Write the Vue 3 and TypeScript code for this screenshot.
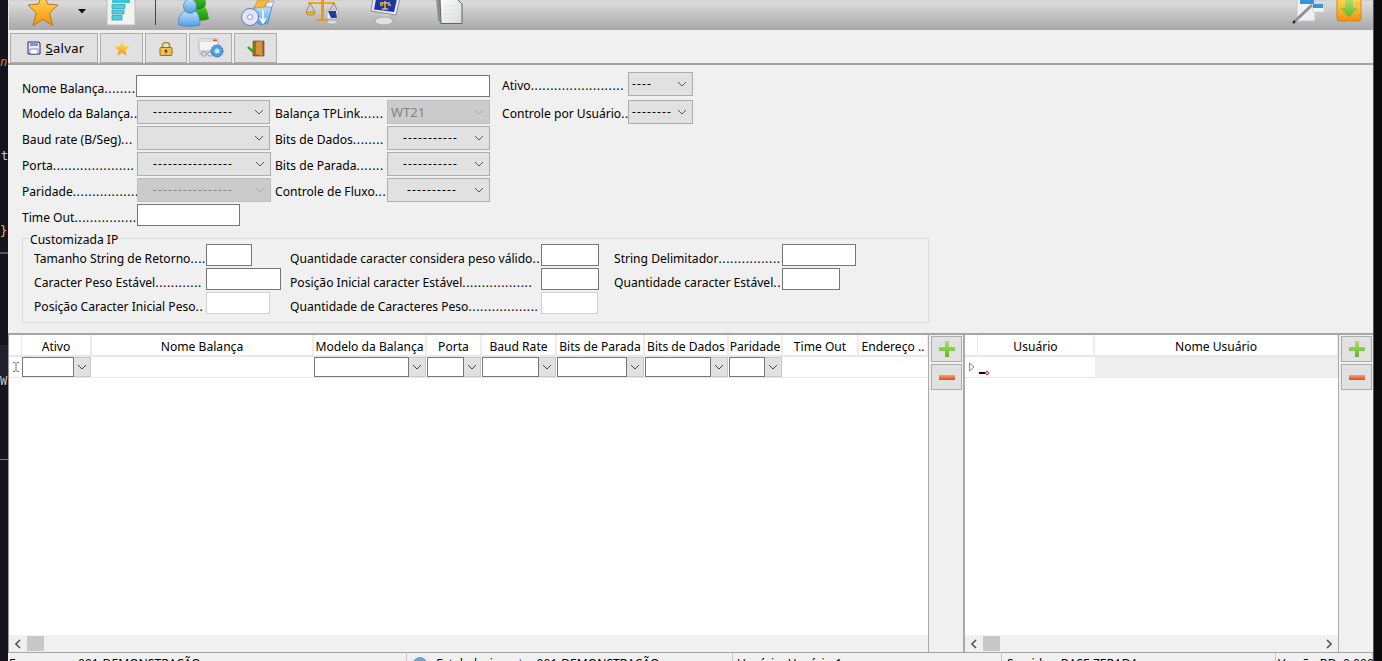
<script setup lang="ts">
type Ctl = { w: number; text?: string; off?: boolean };

const formRows: { label: string; ctl: Ctl; label2: string; ctl2: Ctl }[] = [
  { label: 'Modelo da Balança..', ctl: { w: 133, text: '----------------' }, label2: 'Balança TPLink......', ctl2: { w: 103, text: 'WT21', off: true } },
  { label: 'Baud rate (B/Seg)...', ctl: { w: 133 }, label2: 'Bits de Dados........', ctl2: { w: 103, text: '-----------' } },
  { label: 'Porta.....................', ctl: { w: 134, text: '----------------' }, label2: 'Bits de Parada.......', ctl2: { w: 103, text: '-----------' } },
  { label: 'Paridade.................', ctl: { w: 134, text: '----------------', off: true }, label2: 'Controle de Fluxo...', ctl2: { w: 103, text: '----------' } },
];

const customRows = [
  { a: 'Tamanho String de Retorno....', aw: 46, b: 'Quantidade caracter considera peso válido..', bw: 58, c: 'String Delimitador................', cw: 74 },
  { a: 'Caracter Peso Estável............', aw: 75, b: 'Posição Inicial caracter Estável..................', bw: 58, c: 'Quantidade caracter Estável..', cw: 58 },
  { a: 'Posição Caracter Inicial Peso..', aw: 64, b: 'Quantidade de Caracteres Peso..................', bw: 57, c: '', cw: 0 },
];

const balancaCols = [
  { name: 'Ativo', w: 70, sel: true },
  { name: 'Nome Balança', w: 222, sel: false },
  { name: 'Modelo da Balança', w: 113, sel: true },
  { name: 'Porta', w: 55, sel: true },
  { name: 'Baud Rate', w: 75, sel: true },
  { name: 'Bits de Parada', w: 88, sel: true },
  { name: 'Bits de Dados', w: 84, sel: true },
  { name: 'Paridade', w: 54, sel: true },
  { name: 'Time Out', w: 76, sel: false },
  { name: 'Endereço ..', w: 70, sel: false },
];

const statusCells = [
  { text: 'Empresa....: 001-DEMONSTRAÇÃO', w: 399, pad: 1, icon: false },
  { text: 'Estabelecimento: 001-DEMONSTRAÇÃO', w: 326, pad: 5, icon: true },
  { text: 'Usuário: Usuário 1', w: 269, pad: 4, icon: false },
  { text: 'Servidor: BASE ZERADA', w: 274, pad: 5, icon: false },
  { text: 'Versão BD: 0.000', w: 97, pad: 2, icon: false },
];

// the trailing dots run wider than the words in the original font
function words(label: string) {
  return label.replace(/\.+$/, '');
}

function dots(label: string) {
  return label.slice(words(label).length);
}
</script>

<template>
  <div class="desk">
    <svg class="defs" width="0" height="0" aria-hidden="true">
      <defs>
        <linearGradient id="gStar" x1="0" y1="0" x2="0" y2="1">
          <stop offset="0" stop-color="#ffe27a" />
          <stop offset="0.55" stop-color="#fdb92e" />
          <stop offset="1" stop-color="#f08f12" />
        </linearGradient>
        <linearGradient id="gBlue" x1="0" y1="0" x2="0" y2="1">
          <stop offset="0" stop-color="#bfe0fb" />
          <stop offset="1" stop-color="#4f9ee6" />
        </linearGradient>
        <linearGradient id="gGreen" x1="0" y1="0" x2="0" y2="1">
          <stop offset="0" stop-color="#48c828" />
          <stop offset="1" stop-color="#1d8a0c" />
        </linearGradient>
        <linearGradient id="gPlus" x1="0" y1="0" x2="0" y2="1">
          <stop offset="0" stop-color="#b4e06a" />
          <stop offset="1" stop-color="#62b52c" />
        </linearGradient>
        <linearGradient id="gMinus" x1="0" y1="0" x2="0" y2="1">
          <stop offset="0" stop-color="#f9a070" />
          <stop offset="1" stop-color="#e2481e" />
        </linearGradient>
        <linearGradient id="gPage" x1="0" y1="0" x2="1" y2="1">
          <stop offset="0" stop-color="#ffffff" />
          <stop offset="1" stop-color="#d5dbd8" />
        </linearGradient>
      </defs>
    </svg>

    <div class="code-strip">
      <span class="c1">n.</span>
      <span class="c2">t</span>
      <span class="c3">}</span>
      <i class="c4"></i>
      <i class="c5"></i>
      <span class="c6">W</span>
      <i class="c7"></i>
    </div>

    <div class="win">
      <header class="topbar">
        <svg class="ti" style="margin-left:18px" width="32" height="30" viewBox="0 0 32 30">
          <path d="M16 -9 20.5 4 31 5 22.6 13 25.5 25.5 16 19.5 6 25.5 9.2 13 1 5 11.5 4Z" fill="url(#gStar)" stroke="#b5772a" />
        </svg>
        <svg class="ti" style="margin-left:18px" width="10" height="30" viewBox="0 0 10 30">
          <path d="M1 9H9L5 13.5Z" fill="#111" />
        </svg>
        <svg class="ti" style="margin-left:19px" width="30" height="30" viewBox="0 0 30 30">
          <path d="M1 -1H29V25H1Z" fill="#f1f4ee" stroke="#b9bfbb" />
          <path d="M6 0H24V3H6Z" fill="#38c6d9" />
          <path d="M6 4.500H19V8.500H6ZM6 10H18V14H6ZM6 15.500H16V20H6Z" fill="#4fd0e0" stroke="#2399ad" stroke-width=".7" />
        </svg>
        <i class="tsep"></i>
        <svg class="ti" style="margin-left:22px" width="32" height="30" viewBox="0 0 32 30">
          <ellipse cx="21" cy="3" rx="7" ry="7" fill="url(#gGreen)" />
          <path d="M14 8C18 11 25 11 27 7 30 11 30 16 31 19 27 21 19 21 15 20Z" fill="url(#gGreen)" />
          <ellipse cx="12" cy="6" rx="6.500" ry="7" fill="url(#gBlue)" stroke="#3f7fc0" stroke-width=".7" />
          <path d="M0 24C0 17 4 12 7 11 10 14 14 14 17 11 20 12 22 17 22 25 15 27 5 27 0 24Z" fill="url(#gBlue)" stroke="#3f7fc0" stroke-width=".7" />
        </svg>
        <svg class="ti" style="margin-left:31px" width="34" height="30" viewBox="0 0 34 30">
          <path d="M13 7 31 6 27 23 20 25 15 22Z" fill="url(#gBlue)" stroke="#5f8fc0" />
          <path d="M22 10V22M19 18 22 23 25 18" fill="none" stroke="#fff" stroke-width="1.500" />
          <path d="M17 0 28 0 23 7 13 8Z" fill="#f8b846" stroke="#d18a20" stroke-width=".7" />
          <path d="M25 3 33 1 31 7 25 7Z" fill="#eef2f8" stroke="#7f8fa8" stroke-width=".7" />
          <circle cx="9" cy="17" r="8.500" fill="#e2e5f6" stroke="#6a75c0" />
          <circle cx="9" cy="17" r="2.500" fill="#fff" stroke="#8e97d0" />
        </svg>
        <svg class="ti" style="margin-left:30px" width="34" height="30" viewBox="0 0 34 30">
          <path d="M3 2H30V4H3Z" fill="#eda62a" />
          <path d="M16 0H19V20H16ZM11 19H23V21H11Z" fill="#e99a1c" />
          <path d="M5 3 1 12M5 3 10 12M29 3 25 10M29 3 33 12" stroke="#8a7a55" stroke-width=".8" fill="none" />
          <path d="M1 12H10L9 15H2Z" fill="#e6b43a" stroke="#a57b1a" stroke-width=".6" />
          <path d="M22 10H33V19H22Z" fill="#eef1f5" stroke="#9aa0a6" stroke-width=".7" />
          <path d="M23 11 31 11 32 18 26 18Z" fill="#1e3aa8" />
          <ellipse cx="27" cy="22" rx="5" ry="2" fill="#d9dcdc" stroke="#99a" stroke-width=".5" />
        </svg>
        <svg class="ti" style="margin-left:31px" width="32" height="30" viewBox="0 0 32 30">
          <path d="M3 -2 30 -2 26 15 1 11Z" fill="#e7eaf0" stroke="#8b8f96" />
          <path d="M6 -1 27 -1 24 12 4 9.500Z" fill="#1c35a8" />
          <path d="M10 3H20M15 1V9M12 9H18" stroke="#f1b631" stroke-width="1.500" fill="none" />
          <path d="M10 5H13M18 5H21" stroke="#f1b631" stroke-width="1.500" />
          <path d="M11 14H19V19H11Z" fill="#c8cccc" />
          <ellipse cx="14" cy="21" rx="9" ry="4" fill="#dfe2e2" stroke="#a7aaaa" />
        </svg>
        <svg class="ti" style="margin-left:33px" width="30" height="30" viewBox="0 0 30 30">
          <path d="M1 -2 5 -2 6 24 3 20Z" fill="#8b8d8d" />
          <path d="M5 -2H21L27 4V23.500H6Z" fill="url(#gPage)" stroke="#5f6464" />
          <path d="M9 6H24M9 10H24M9 14H24M9 18H24" stroke="#dde4e1" />
        </svg>
        <span class="fill"></span>
        <svg class="ti" width="32" height="30" viewBox="0 0 32 30">
          <path d="M5 -1H23V21H5Z" fill="#eef0f2" stroke="#c2c5c8" />
          <path d="M8 0H22V4H8Z" fill="#3296dc" />
          <path d="M21 5H32V12H21Z" fill="#f2f4f5" stroke="#c2c5c8" stroke-width=".6" />
          <path d="M21 4H31V8H21Z" fill="#3296dc" />
          <path d="M1 23 20 5" stroke="#8e9294" stroke-width="3" />
          <path d="M1 23 3 21" stroke="#222" stroke-width="2" />
        </svg>
        <svg class="ti" style="margin-left:12px;margin-right:11px" width="26" height="30" viewBox="0 0 26 30">
          <rect x="1" y="-6" width="24" height="27" rx="3" fill="url(#gStar)" stroke="#d3851c" />
          <path d="M9 -1H17V8H22L13 17 4 8H9Z" fill="url(#gPlus)" />
        </svg>
      </header>

      <nav class="toolbar">
        <button type="button" class="tb tb-save">
          <svg width="14" height="14" viewBox="0 0 14 14">
            <path d="M1 1H12L13 2V13H1Z" fill="#e8ecf6" stroke="#1c2862" />
            <path d="M3 1H11V5H3Z" fill="#8793c4" />
            <path d="M3 8H11V13H3Z" fill="#fff" stroke="#3a4688" stroke-width=".6" />
          </svg>
          <span class="save-txt"><u>S</u>alvar</span>
        </button>
        <button type="button" class="tb" style="width:43px" aria-label="Favorito">
          <svg width="18" height="17" viewBox="0 0 18 17">
            <path d="M9 1 11.300 6 17 6.600 12.600 10.200 14 16 9 13 4 16 5.400 10.200 1 6.600 6.700 6Z" fill="url(#gStar)" stroke="#e8d9b0" stroke-width=".8" />
          </svg>
        </button>
        <button type="button" class="tb" style="width:42px" aria-label="Bloquear">
          <svg width="14" height="15" viewBox="0 0 14 15">
            <path d="M3.500 7V4.500C3.500 .5 10.500 .5 10.500 4.500V7" fill="none" stroke="#b58a2a" stroke-width="1.600" />
            <rect x="1" y="6.500" width="12" height="8" rx="1" fill="#f3c048" stroke="#94701c" />
            <path d="M7 8.500V12.500M5.500 10.500 7 9 8.500 10.500" stroke="#222" fill="none" />
          </svg>
        </button>
        <button type="button" class="tb" style="width:43px" aria-label="Configurar">
          <svg width="26" height="20" viewBox="0 0 26 20">
            <path d="M1 1H20V13H1Z" fill="#f4f4f4" stroke="#b5b5b5" />
            <path d="M1 1H20V4H1Z" fill="#dcdcdc" />
            <path d="M15 1.500H19V3H15Z" fill="#d94b3c" />
            <path d="M1 13H15V17H1Z" fill="#c8ccd0" />
            <circle cx="6" cy="16" r="2.200" fill="#e8eaec" stroke="#8f9499" />
            <circle cx="12" cy="16" r="2.200" fill="#e8eaec" stroke="#8f9499" />
            <circle cx="19" cy="13" r="6" fill="#4a9fe6" stroke="#1e6cb8" stroke-dasharray="2 1" />
            <circle cx="19" cy="13" r="2.500" fill="#cfe6fa" />
          </svg>
        </button>
        <button type="button" class="tb" style="width:43px" aria-label="Sair">
          <svg width="18" height="17" viewBox="0 0 18 17">
            <path d="M6 1H17V16H6Z" fill="#a8671e" stroke="#7a4a14" stroke-width=".7" />
            <path d="M9 2 15 1V16L9 14Z" fill="#d8923c" />
            <path d="M1 7 5 11 9 6" fill="none" stroke="#3aa02a" stroke-width="2.400" />
          </svg>
        </button>
      </nav>

      <section class="form">
        <div class="form-top">
          <div class="form-left">
            <label class="lbl">Nome Balança<span class="dots">........</span></label>
            <div class="inp name-inp"></div>
            <template v-for="r in formRows" :key="r.label">
              <label class="lbl">{{ words(r.label) }}<span class="dots">{{ dots(r.label) }}</span></label>
              <div class="sel" :class="{ off: r.ctl.off }" :style="{ width: r.ctl.w + 'px' }">
                <span class="sel-txt">{{ r.ctl.text }}</span>
                <svg width="10" height="6" viewBox="0 0 10 6"><path d="M1 1 5 5 9 1" fill="none" stroke="currentColor" /></svg>
              </div>
              <label class="lbl">{{ words(r.label2) }}<span class="dots">{{ dots(r.label2) }}</span></label>
              <div class="sel" :class="{ off: r.ctl2.off, xs: r.ctl2.text === '----------', wt: r.ctl2.text === 'WT21' }" :style="{ width: r.ctl2.w + 'px' }">
                <span class="sel-txt">{{ r.ctl2.text }}</span>
                <svg width="10" height="6" viewBox="0 0 10 6"><path d="M1 1 5 5 9 1" fill="none" stroke="currentColor" /></svg>
              </div>
            </template>
            <label class="lbl">Time Out<span class="dots">................</span></label>
            <div class="inp time-inp"></div>
          </div>
          <div class="form-right">
            <label class="lbl">Ativo<span class="dots">........................</span></label>
            <div class="sel tiny">
              <span class="sel-txt">----</span>
              <svg width="10" height="6" viewBox="0 0 10 6"><path d="M1 1 5 5 9 1" fill="none" stroke="currentColor" /></svg>
            </div>
            <label class="lbl">Controle por Usuário<span class="dots">..</span></label>
            <div class="sel tiny">
              <span class="sel-txt">--------</span>
              <svg width="10" height="6" viewBox="0 0 10 6"><path d="M1 1 5 5 9 1" fill="none" stroke="currentColor" /></svg>
            </div>
          </div>
        </div>

        <div class="group">
          <span class="legend">Customizada IP</span>
          <div class="group-grid">
            <template v-for="(r, i) in customRows" :key="r.a">
              <label class="lbl">{{ words(r.a) }}<span class="dots">{{ dots(r.a) }}</span></label>
              <div class="inp" :class="{ faint: i === 2 }" :style="{ width: r.aw + 'px' }"></div>
              <label class="lbl">{{ words(r.b) }}<span class="dots">{{ dots(r.b) }}</span></label>
              <div class="inp" :class="{ faint: i === 2 }" :style="{ width: r.bw + 'px' }"></div>
              <label class="lbl">{{ words(r.c) }}<span class="dots">{{ dots(r.c) }}</span></label>
              <div v-if="r.cw" class="inp" :style="{ width: r.cw + 'px' }"></div>
            </template>
          </div>
        </div>
      </section>

      <section class="grids">
        <div class="panel panel-a">
          <div class="table">
            <div class="thead">
              <div class="cell ind ind-a"></div>
              <div v-for="c in balancaCols" :key="c.name" class="cell th" :style="{ width: c.w + 'px' }">{{ c.name }}</div>
            </div>
            <div class="trow">
              <div class="cell ind ind-a">
                <svg width="8" height="10" viewBox="0 0 8 10"><path d="M1 .5H3L4 1.500 5 .5H7M4 1.500V8.500M1 9.500H3L4 8.500 5 9.500H7" fill="none" stroke="#777" /></svg>
              </div>
              <div v-for="c in balancaCols" :key="c.name" class="cell td" :style="{ width: c.w + 'px' }">
                <div v-if="c.sel" class="cmb">
                  <span class="cmb-box"></span>
                  <span class="cmb-arrow">
                    <svg width="10" height="6" viewBox="0 0 10 6"><path d="M1 1 5 5 9 1" fill="none" stroke="#444" /></svg>
                  </span>
                </div>
              </div>
            </div>
          </div>
          <div class="hscroll">
            <svg width="6" height="10" viewBox="0 0 6 10"><path d="M5 1 1 5 5 9" fill="none" stroke="#555" stroke-width="1.600" /></svg>
            <i class="thumb"></i>
          </div>
        </div>
        <div class="side">
          <button type="button" class="pm" aria-label="Adicionar">
            <svg width="16" height="16" viewBox="0 0 16 16"><path d="M6 0H10V6H16V10H10V16H6V10H0V6H6Z" fill="url(#gPlus)" /></svg>
          </button>
          <button type="button" class="pm" aria-label="Remover">
            <svg width="16" height="5" viewBox="0 0 16 5"><path d="M0 0H16V5H0Z" fill="url(#gMinus)" /></svg>
          </button>
        </div>

        <div class="panel panel-b">
          <div class="table">
            <div class="thead">
              <div class="cell ind ind-b"></div>
              <div class="cell th" style="width:117px">Usuário</div>
              <div class="cell th" style="width:244px">Nome Usuário</div>
            </div>
            <div class="trow">
              <div class="cell ind ind-b">
                <svg class="arrow" width="6" height="10" viewBox="0 0 6 10"><path d="M.5 1 5 5 .5 9Z" fill="#fff" stroke="#888" /></svg>
              </div>
              <div class="cell td user-cell" style="width:117px">
                <i class="mark"></i>
              </div>
              <div class="cell td name-cell" style="width:244px"></div>
            </div>
          </div>
          <div class="hscroll">
            <svg width="6" height="10" viewBox="0 0 6 10"><path d="M5 1 1 5 5 9" fill="none" stroke="#555" stroke-width="1.600" /></svg>
            <i class="thumb"></i>
            <span class="fill"></span>
            <svg width="6" height="10" viewBox="0 0 6 10"><path d="M1 1 5 5 1 9" fill="none" stroke="#555" stroke-width="1.600" /></svg>
          </div>
        </div>
        <div class="side">
          <button type="button" class="pm" aria-label="Adicionar usuário">
            <svg width="16" height="16" viewBox="0 0 16 16"><path d="M6 0H10V6H16V10H10V16H6V10H0V6H6Z" fill="url(#gPlus)" /></svg>
          </button>
          <button type="button" class="pm" aria-label="Remover usuário">
            <svg width="16" height="5" viewBox="0 0 16 5"><path d="M0 0H16V5H0Z" fill="url(#gMinus)" /></svg>
          </button>
        </div>
      </section>

      <footer class="status">
        <div v-for="s in statusCells" :key="s.text" class="st" :style="{ width: s.w + 'px', paddingLeft: s.pad + 'px' }">
          <svg v-if="s.icon" class="st-ico" width="16" height="14" viewBox="0 0 16 14"><circle cx="8" cy="8" r="7" fill="#6f9fd0" /></svg>
          {{ s.text }}
        </div>
      </footer>
    </div>
    <div class="edge"></div>
  </div>
</template>

<style scoped>
.desk {
  display: flex;
  width: 1382px;
  height: 661px;
  overflow: hidden;
  background: #000;
  font-family: "Noto Sans", "Liberation Sans", sans-serif;
  font-size: 12.1px;
  color: #000;
}

.defs {
  position: absolute;
}

.code-strip {
  position: relative;
  flex: none;
  width: 8px;
  background: #15141f;
  overflow: hidden;
  font-family: "DejaVu Sans Mono", monospace;
  font-size: 12px;
}

.code-strip span,
.code-strip i {
  position: absolute;
  display: block;
}

.c1 {
  top: 55px;
  left: 0;
  color: #d9803a;
  font-style: italic;
}

.c2 {
  top: 149px;
  left: 1px;
  color: #b8cfe6;
}

.c3 {
  top: 224px;
  left: 0;
  color: #e8c23a;
}

.c4 {
  top: 252px;
  left: 0;
  width: 8px;
  height: 2px;
  background: #555;
}

.c5 {
  top: 345px;
  left: 0;
  width: 8px;
  height: 33px;
  background: #211f30;
}

.c6 {
  top: 374px;
  left: 0;
  color: #c9c9c9;
}

.c7 {
  top: 459px;
  left: 0;
  width: 8px;
  height: 1px;
  background: #e040a0;
}

.win {
  flex: none;
  width: 1365px;
  height: 661px;
  display: flex;
  flex-direction: column;
  background: #f0f0f0;
}

.edge {
  flex: none;
  width: 9px;
  background: #0a0a0a;
  border-left: 1px solid #555;
}

.topbar {
  flex: none;
  height: 30px;
  display: flex;
  overflow: hidden;
  background: linear-gradient(#cdcdcd, #dcdcdc 2px, #c8c8c8 40%, #a8a8a8);
  border-left: 1px solid #e6e6e6;
}

.ti {
  flex: none;
}

.tsep {
  flex: none;
  width: 1px;
  height: 25px;
  margin-left: 19px;
  background: #444;
}

.fill {
  flex: 1;
}

.toolbar {
  flex: none;
  height: 35px;
  box-sizing: border-box;
  padding: 3px 0 0 2px;
  display: flex;
  gap: 2px;
  border-bottom: 2px solid #a5a5a5;
}

.tb {
  height: 30px;
  width: 43px;
  box-sizing: border-box;
  display: flex;
  align-items: center;
  justify-content: center;
  gap: 4px;
  padding: 0;
  background: #e1e1e1;
  border: 1px solid #adadad;
  font: inherit;
  color: #000;
}

.tb-save {
  width: 88px;
  gap: 5px;
  padding-left: 3px;
}

.save-txt {
  font-size: 13px;
  letter-spacing: 0.3px;
}

.form {
  flex: none;
  height: 268px;
  box-sizing: border-box;
  padding: 7px 0 0 14px;
}

.form-top {
  display: flex;
  gap: 12px;
}

.form-left {
  display: grid;
  grid-template-columns: 115px 138px 112px 103px;
  grid-template-rows: 23px 24px 24px 24px 24px 22px;
  row-gap: 2px;
  margin-top: 3px;
}

.form-right {
  display: grid;
  grid-template-columns: 126px 65px;
  grid-template-rows: 24px 24px;
  row-gap: 4px;
  align-self: start;
}

.lbl {
  display: block;
  overflow: hidden;
  white-space: nowrap;
  line-height: 28px;
  height: 24px;
}

.dots {
  letter-spacing: 0.65px;
}

.inp {
  box-sizing: border-box;
  height: 22px;
  background: #fff;
  border: 1px solid #777;
}

.inp.faint {
  border-color: #d0d0d0;
}

.name-inp {
  grid-column: 2 / 5;
  margin-left: -1px;
  width: 354px;
}

.time-inp {
  width: 103px;
}

.sel {
  box-sizing: border-box;
  height: 24px;
  display: flex;
  align-items: center;
  justify-content: space-between;
  padding: 0 5px 0 15px;
  background: #e1e1e1;
  border: 1px solid #adadad;
  color: #555;
}

.sel.xs {
  padding-left: 19px;
}

.sel.tiny {
  width: 65px;
  padding-left: 3px;
}

.sel-txt {
  color: #000;
  line-height: 20px;
  letter-spacing: 1.1px;
}

.sel.off {
  background: #cbcbcb;
  border-color: #bfbfbf;
  color: #aaa;
}

.sel.off .sel-txt {
  color: #838383;
}

.sel.wt {
  padding-left: 3px;
}

.sel.wt .sel-txt {
  font-size: 13px;
  letter-spacing: 0;
}

.group {
  position: relative;
  box-sizing: border-box;
  width: 907px;
  height: 85px;
  margin-top: 12px;
  padding: 5px 0 0 11px;
  border: 1px solid #dcdcdc;
}

.legend {
  position: absolute;
  top: -6px;
  left: 6px;
  padding: 0 1px;
  line-height: 13px;
  background: #f0f0f0;
}

.group-grid {
  display: grid;
  grid-template-columns: 172px 84px 251px 73px 168px auto;
  grid-auto-rows: 22px;
  row-gap: 2px;
}

.group-grid .lbl {
  height: 22px;
  line-height: 29px;
}

.grids {
  flex: none;
  height: 319px;
  box-sizing: border-box;
  display: flex;
  border-top: 2px solid #a5a5a5;
}

.panel {
  display: flex;
  flex-direction: column;
  background: #fff;
}

.panel-a {
  width: 921px;
  box-sizing: border-box;
  border-left: 1px solid #999;
  border-right: 1px solid #aaa;
}

.panel-b {
  width: 376px;
  box-sizing: border-box;
  border-left: 2px solid #aaa;
  border-right: 1px solid #aaa;
}

.table {
  flex: 1;
  overflow: hidden;
}

.thead,
.trow {
  display: flex;
}

.thead {
  height: 22px;
  border-bottom: 2px solid #e8e8e8;
  box-sizing: border-box;
}

.trow {
  height: 21px;
  box-sizing: border-box;
  border-bottom: 1px solid #e8e8e8;
}

.cell {
  flex: none;
  box-sizing: border-box;
  min-width: 0;
  overflow: hidden;
}

.th {
  text-align: center;
  white-space: nowrap;
  line-height: 24px;
  border-right: 2px solid #ececec;
}

.td {
  padding-right: 1px;
}

.ind {
  display: flex;
  align-items: center;
  justify-content: center;
}

.thead .ind {
  border-right: 1px solid #ececec;
}

.ind-a {
  width: 13px;
}

.ind-b {
  width: 12px;
  margin-left: 1px;
}

.cmb {
  display: flex;
  height: 20px;
}

.cmb-box {
  flex: 1;
  background: #fff;
  border: 1px solid #777;
}

.cmb-arrow {
  flex: none;
  width: 17px;
  display: flex;
  align-items: center;
  justify-content: center;
  background: #e1e1e1;
  border: 1px solid #c8c8c8;
  border-left: none;
  box-sizing: border-box;
}

.user-cell {
  position: relative;
}

.mark {
  position: absolute;
  left: 1px;
  top: 15px;
  width: 6px;
  height: 1px;
  background: #000;
  box-shadow: 0 1px 0 #000;
}

.mark::after {
  content: "";
  position: absolute;
  left: 6px;
  top: -1px;
  width: 4px;
  height: 4px;
  box-sizing: border-box;
  border: 1px solid #e01020;
  border-radius: 50%;
  background: #fff;
}

.name-cell {
  background: #eeeeee;
}

.hscroll {
  flex: none;
  height: 17px;
  display: flex;
  align-items: center;
  background: #f0f0f0;
  padding-left: 6px;
  padding-right: 6px;
}

.thumb {
  display: block;
  width: 17px;
  height: 15px;
  margin-left: 6px;
  background: #c8c8c8;
}

.side {
  flex: none;
  width: 34px;
  box-sizing: border-box;
  padding: 1px 0 0 2px;
  display: flex;
  flex-direction: column;
  gap: 2px;
  background: #f0f0f0;
}

.pm {
  width: 31px;
  height: 26px;
  display: flex;
  align-items: center;
  justify-content: center;
  padding: 0;
  background: #e1e1e1;
  border: 1px solid #adadad;
}

.status {
  flex: none;
  height: 9px;
  display: flex;
  overflow: hidden;
  border-top: 1px solid #a5a5a5;
  box-sizing: border-box;
}

.st {
  flex: none;
  box-sizing: border-box;
  height: 24px;
  padding-top: 3px;
  border-right: 1px solid #c8c8c8;
  line-height: 16px;
  white-space: nowrap;
}

.st-ico {
  margin: 0 5px 0 0;
  vertical-align: top;
}
</style>
